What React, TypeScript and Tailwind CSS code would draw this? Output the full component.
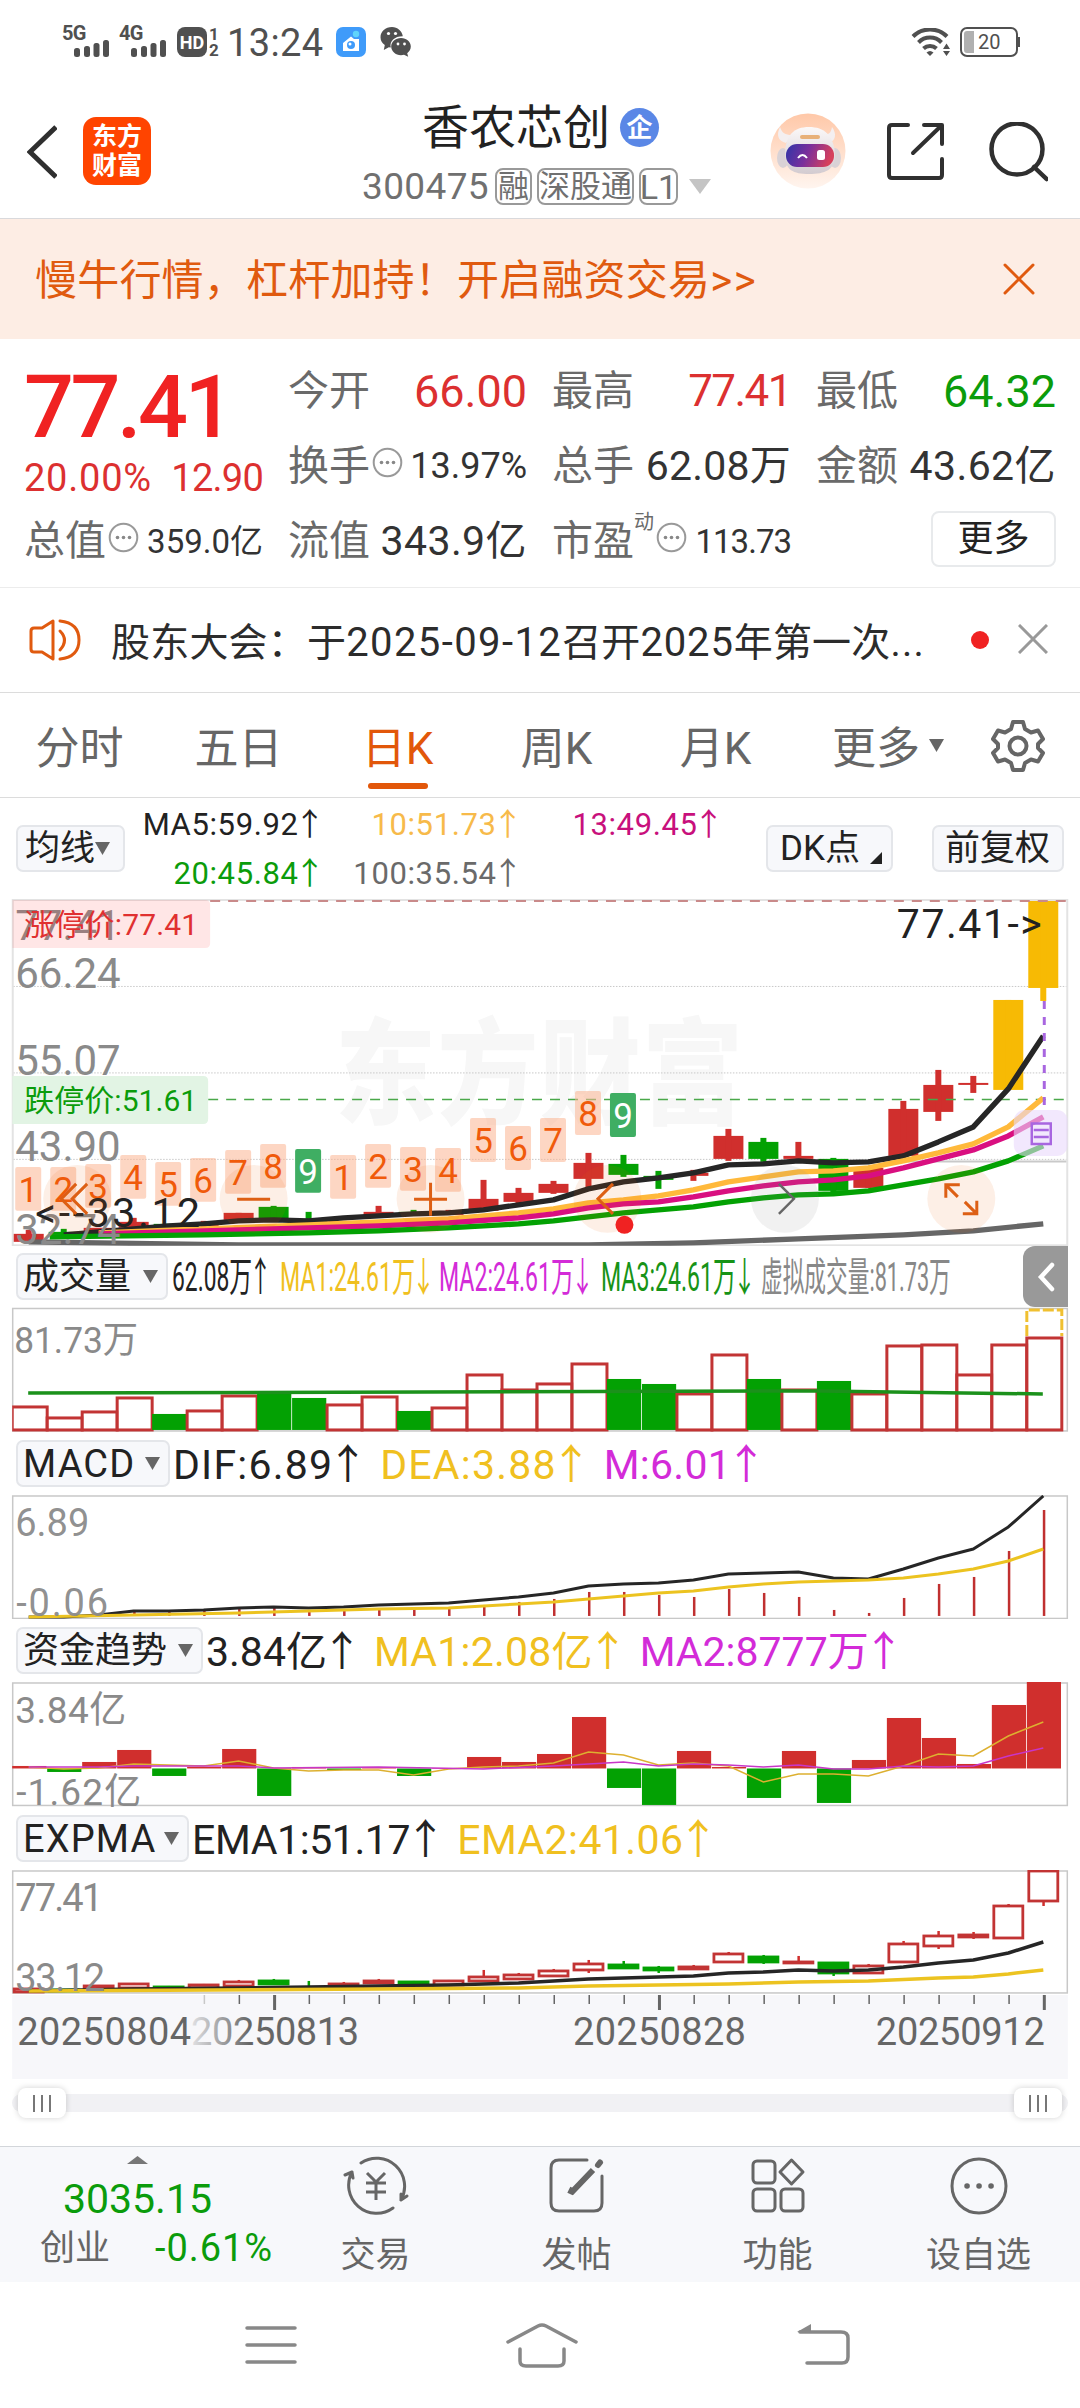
import React from 'react';
import clsx from 'clsx';

const RED = '#d02f2d';
const GREEN = '#03a103';
const YELLOW = '#f7ba04';

// x centre of the n-th trading day
const cx = (i: number) => 28.5 + 35 * i;

type Point = [number, number];
const line = (pts: Point[]) => pts.map(([i, y]) => `${cx(i)},${y}`).join(' ');
const series = (ys: number[]): Point[] => ys.map((y, i) => [i, y]);

// [colour, body top, body bottom, wick top, wick bottom]
type Candle = [string, number, number, number, number];

const candles: Candle[] = [
  ['r', 1234, 1242, 1230, 1242],
  ['g', 1232, 1235, 1229, 1236],
  ['r', 1228, 1232, 1228, 1232],
  ['r', 1222, 1228, 1218, 1228],
  ['g', 1224, 1227, 1224, 1227],
  ['r', 1224, 1226, 1221, 1227],
  ['r', 1213, 1220, 1213, 1220],
  ['g', 1207, 1220, 1206, 1221],
  ['g', 1220, 1222, 1212, 1222],
  ['r', 1221, 1224, 1221, 1224],
  ['r', 1212, 1216, 1206, 1216],
  ['g', 1212, 1214, 1210, 1216],
  ['r', 1211, 1215, 1210, 1215],
  ['r', 1199, 1211, 1180, 1211],
  ['r', 1193, 1202, 1188, 1204],
  ['r', 1184, 1193, 1181, 1194],
  ['r', 1163, 1179, 1153, 1188],
  ['g', 1164, 1175, 1155, 1177],
  ['g', 1176, 1180, 1171, 1189],
  ['r', 1173, 1176, 1170, 1181],
  ['r', 1136, 1159, 1129, 1161],
  ['g', 1142, 1159, 1138, 1162],
  ['r', 1156, 1159, 1142, 1159],
  ['g', 1159, 1191, 1158, 1193],
  ['r', 1168, 1188, 1168, 1188],
  ['r', 1109, 1156, 1101, 1156],
  ['r', 1085, 1112, 1070, 1121],
  ['r', 1083, 1085, 1076, 1093],
  ['y', 1000, 1090, 1000, 1090],
  ['y', 901, 988, 901, 1001],
];

const ma5: Point[] = [
  [1, 1235], [2, 1232], [3, 1229], [4, 1226], [5, 1224], [6, 1221], [7, 1220], [8, 1221], [9, 1218],
  [10, 1216], [11, 1214], [12, 1213], [13, 1210], [14, 1205], [15, 1200], [16, 1189], [17, 1182],
  [18, 1178], [19, 1173], [20, 1165], [21, 1164], [22, 1161], [23, 1163], [24, 1162], [25, 1156],
  [26, 1142], [27, 1127], [28, 1089], [29, 1036],
];
const ma10: Point[] = [
  [2, 1233], [5, 1229], [8, 1225], [10, 1222], [12, 1219], [14, 1213], [15, 1209], [16, 1203],
  [17, 1200], [18, 1196], [19, 1190], [20, 1182], [21, 1177], [22, 1172], [23, 1171], [24, 1168],
  [25, 1161], [26, 1153], [27, 1144], [28, 1127], [29, 1098],
];
const ma13: Point[] = [
  [2, 1234], [5, 1231], [8, 1228], [10, 1226], [12, 1223], [14, 1218], [15, 1214], [16, 1208],
  [17, 1204], [18, 1202], [19, 1197], [20, 1191], [21, 1186], [22, 1182], [23, 1180], [24, 1176],
  [25, 1168], [26, 1159], [27, 1150], [28, 1136], [29, 1117],
];
const ma20: Point[] = [
  [0.6, 1237], [5, 1235], [8, 1233], [10, 1231], [12, 1228], [14, 1224], [15, 1221], [16, 1217],
  [17, 1213], [18, 1210], [19, 1207], [20, 1202], [21, 1198], [22, 1195], [23, 1194], [24, 1191],
  [25, 1185], [26, 1179], [27, 1172], [28, 1161], [29, 1146],
];
const ma100: Point[] = [
  [0, 1242], [6, 1245], [16, 1245], [19, 1243], [22, 1239], [25, 1235], [27, 1231], [29, 1224],
];

// nine-turn signal badges: [label, top]
const turns: [number, number][] = [
  [1, 1167], [2, 1167], [3, 1164], [4, 1155], [5, 1162], [6, 1158], [7, 1150], [8, 1144], [9, 1149],
  [1, 1155], [2, 1144], [3, 1147], [4, 1148], [5, 1118], [6, 1126], [7, 1118], [8, 1091], [9, 1093],
];

const volumes: [string, number][] = [
  ['r', 1408], ['r', 1419], ['r', 1413], ['r', 1399], ['g', 1415], ['r', 1412], ['r', 1397], ['g', 1395],
  ['g', 1399], ['r', 1406], ['r', 1398], ['g', 1412], ['r', 1409], ['r', 1376], ['r', 1391], ['r', 1385],
  ['r', 1365], ['g', 1380], ['g', 1385], ['r', 1395], ['r', 1356], ['g', 1380], ['r', 1391], ['g', 1382],
  ['r', 1395], ['r', 1347], ['r', 1346], ['r', 1376], ['r', 1346], ['r', 1339],
];

const dif = series([
  1618, 1618, 1616, 1612, 1612, 1611, 1609, 1608, 1609, 1608, 1606, 1605, 1604, 1601, 1598, 1594, 1587,
  1585, 1584, 1581, 1575, 1574, 1573, 1579, 1580, 1570, 1559, 1550, 1528, 1497,
]);
const dea: Point[] = [
  [0, 1618], [3, 1616], [6, 1614], [8, 1612], [10, 1610], [12, 1609], [14, 1605], [15, 1603], [16, 1600],
  [17, 1597], [18, 1594], [19, 1592], [20, 1588], [21, 1585], [22, 1583], [23, 1582], [24, 1581],
  [25, 1579], [26, 1575], [27, 1570], [28, 1562], [29, 1550],
];
const macdBars = [
  1617, 1617, 1616, 1612, 1613, 1612, 1609, 1609, 1611, 1611, 1610, 1610, 1609, 1606, 1603, 1600, 1593,
  1593, 1596, 1598, 1590, 1594, 1598, 1611, 1614, 1599, 1585, 1578, 1552, 1511,
];

const flows = [
  1767, 1773, 1763, 1751, 1777, 1768, 1750, 1797, 1768, 1771, 1768, 1777, 1769, 1758, 1763, 1755, 1718,
  1789, 1806, 1752, 1768, 1799, 1752, 1804, 1761, 1719, 1739, 1765, 1706, 1683,
];
const flowMa1 = series([
  1768, 1770, 1769, 1765, 1766, 1767, 1762, 1769, 1772, 1771, 1771, 1776, 1770, 1768, 1767, 1764, 1753,
  1756, 1766, 1764, 1767, 1783, 1775, 1775, 1777, 1767, 1755, 1757, 1737, 1723,
]);
const flowMa2: Point[] = [
  [0, 1768], [2, 1768], [3, 1767], [6, 1767], [7, 1769], [10, 1768], [13, 1770], [15, 1767], [16, 1765],
  [17, 1763], [18, 1767], [19, 1765], [20, 1766], [21, 1768], [22, 1766], [23, 1770], [24, 1770],
  [25, 1767], [26, 1768], [27, 1767], [28, 1757], [29, 1749],
];

const expma: Candle[] = [
  ['r', 1988, 1992, 1988, 1992],
  ['g', 1989, 1991, 1989, 1991],
  ['r', 1985, 1988, 1985, 1988],
  ['r', 1983, 1988, 1983, 1988],
  ['g', 1986, 1988, 1986, 1988],
  ['r', 1984, 1988, 1984, 1988],
  ['r', 1981, 1986, 1980, 1986],
  ['g', 1980, 1984, 1979, 1985],
  ['g', 1987, 1988, 1981, 1988],
  ['r', 1983, 1987, 1982, 1987],
  ['r', 1980, 1983, 1979, 1984],
  ['g', 1981, 1982, 1981, 1982],
  ['r', 1980, 1985, 1980, 1985],
  ['r', 1976, 1981, 1970, 1982],
  ['r', 1974, 1979, 1973, 1979],
  ['r', 1970, 1976, 1969, 1977],
  ['r', 1963, 1970, 1960, 1973],
  ['g', 1964, 1968, 1961, 1969],
  ['g', 1967, 1970, 1966, 1973],
  ['r', 1966, 1969, 1965, 1969],
  ['r', 1953, 1962, 1952, 1963],
  ['g', 1956, 1962, 1955, 1964],
  ['r', 1961, 1963, 1956, 1964],
  ['g', 1962, 1973, 1962, 1976],
  ['r', 1965, 1973, 1964, 1974],
  ['r', 1943, 1962, 1941, 1963],
  ['r', 1935, 1946, 1931, 1949],
  ['r', 1934, 1937, 1932, 1939],
  ['r', 1905, 1938, 1904, 1939],
  ['r', 1870, 1901, 1870, 1906],
];
const ema1: Point[] = [
  [0, 1991], [3, 1989], [6, 1988], [8, 1987], [10, 1986], [12, 1985], [14, 1983], [16, 1979], [18, 1977],
  [19, 1976], [20, 1973], [21, 1972], [22, 1970], [23, 1971], [24, 1970], [25, 1967], [26, 1963],
  [27, 1960], [28, 1953], [29, 1942],
];
const ema2: Point[] = [
  [0, 1991], [10, 1989], [14, 1988], [16, 1986], [18, 1985], [20, 1984], [22, 1982], [24, 1981],
  [26, 1978], [27, 1977], [28, 1974], [29, 1970],
];

const fill = (c: string) => (c === 'r' ? RED : c === 'g' ? GREEN : YELLOW);

const Arrow: React.FC<{ down?: boolean }> = ({ down }) => (
  <span className="ml-[0.08em] inline-flex w-[0.58em] justify-center leading-none">{down ? '↓' : '↑'}</span>
);

const Bubble: React.FC = () => (
  <svg width="31" height="31" viewBox="0 0 31 31" fill="none" className="shrink-0">
    <circle cx="15.5" cy="15.5" r="13.8" stroke="#999" strokeWidth="2" />
    <circle cx="9.5" cy="15.5" r="1.8" fill="#888" />
    <circle cx="15.5" cy="15.5" r="1.8" fill="#888" />
    <circle cx="21.5" cy="15.5" r="1.8" fill="#888" />
  </svg>
);

const Signal: React.FC<{ label: string }> = ({ label }) => (
  <div className="relative h-8 w-[48px]">
    <span className="absolute left-0 top-0 text-[20px] font-bold leading-[16px] tracking-[-0.03em]">{label}</span>
    <svg width="36" height="18" viewBox="0 0 36 18" className="absolute bottom-0 left-3" fill="#505050">
      <rect x="0" y="9" width="6" height="9" rx="2.5" />
      <rect x="10" y="7" width="6" height="11" rx="2.5" />
      <rect x="19.5" y="4" width="6" height="14" rx="2.5" />
      <rect x="29" y="1" width="6" height="17" rx="2.5" />
    </svg>
  </div>
);

const StatusBar: React.FC = () => (
  <div className="flex h-[84px] items-start pl-[62px] pr-[60px] pt-[25px] text-[#505050]">
    <Signal label="5G" />
    <div className="w-[9px]" />
    <Signal label="4G" />
    <div className="ml-[10px] mt-[2px] flex h-[30px] w-[30px] items-center justify-center rounded-[8px] bg-[#505050] text-[18px] font-bold text-white">
      HD
    </div>
    <div className="ml-[2px] mt-[1px] flex w-[10px] flex-col text-center text-[17px] font-bold leading-[16px]">
      <span>1</span>
      <span>2</span>
    </div>
    <span className="ml-[8px] text-[38px] leading-[36px] tracking-[0.01em]">13:24</span>
    <svg width="30" height="30" viewBox="0 0 30 30" className="ml-[12px] mt-[2px]">
      <rect width="30" height="30" rx="7" fill="#3f9bfa" />
      <path d="M7 24V16L15 9.500L18 12H23V24Z" fill="#fff" />
      <circle cx="15" cy="18" r="4" fill="#3f9bfa" />
      <circle cx="14" cy="17" r="1.5" fill="#fff" />
      <circle cx="20" cy="7" r="3.2" fill="#5fd4fb" />
    </svg>
    <svg width="31" height="30" viewBox="0 0 31 30" className="ml-[14px] mt-[2px]" fill="#505050">
      <path d="M12 0C5.400 0 .5 4.500 .5 10.200c0 3.400 1.700 6 4.300 7.900L3.800 23l5-2.800 2 .4c-1.600-6.600 4-11.500 12-11.400C22 4 17.500 0 12 0Z" />
      <path d="M21 11c-5.600 0-9.800 3.800-9.800 8.600s4.200 8.600 9.800 8.600c1 0 2-.1 3-.4l4.200 2-1-3.600c2.200-1.600 3.600-4 3.600-6.600C30.800 14.800 26.600 11 21 11Z" />
      <circle cx="8.5" cy="6.5" r="1.6" fill="#fff" />
      <circle cx="15.5" cy="6.5" r="1.6" fill="#fff" />
      <circle cx="18" cy="17" r="1.4" fill="#fff" />
      <circle cx="24.5" cy="17" r="1.4" fill="#fff" />
    </svg>
    <div className="flex-1" />
    <svg width="40" height="30" viewBox="0 0 40 30" fill="none" stroke="#505050" strokeWidth="4" className="mt-[3px]">
      <path d="M2 8.500A24 24 0 0 1 36 8.500" />
      <path d="M7.500 14.500A16 16 0 0 1 30.500 14.500" />
      <path d="M12.500 20.500A9.500 9.500 0 0 1 25.500 20.500" />
      <path d="M19 28L15.500 24.500Q19 21.500 22.500 24.500Z" fill="#505050" stroke="none" />
      <path d="M32 21L35.500 15.500L39 21Z M32 23L35.500 28L39 23Z" fill="#505050" stroke="none" />
    </svg>
    <div className="ml-[9px] mt-[2px] flex h-[30px] w-[58px] items-center rounded-[7px] border-2 border-[#505050] p-[2px]">
      <div className="h-full w-[10px] rounded-l-[3px] bg-[#b0b0b0]" />
      <span className="ml-[4px] text-[20px] leading-none">20</span>
    </div>
    <div className="mt-[12px] h-[10px] w-[2px] bg-[#505050]" />
  </div>
);

const Robot: React.FC = () => (
  <svg width="76" height="76" viewBox="0 0 76 76">
    <defs>
      <linearGradient id="halo" x1="0" y1="0" x2="0" y2="1">
        <stop offset="0" stopColor="#ffc8a8" />
        <stop offset="1" stopColor="#fff5ef" />
      </linearGradient>
      <linearGradient id="visor" x1="0" y1="0" x2="1" y2="0.2">
        <stop offset="0" stopColor="#2f35a8" />
        <stop offset="0.5" stopColor="#7a2f9c" />
        <stop offset="1" stopColor="#d6405c" />
      </linearGradient>
      <linearGradient id="shell" x1="0" y1="0" x2="0" y2="1">
        <stop offset="0" stopColor="#fbf8f8" />
        <stop offset="1" stopColor="#d3cbd0" />
      </linearGradient>
    </defs>
    <circle cx="38" cy="38" r="37.5" fill="url(#halo)" />
    <path d="M10 14C6 22 8 28 16 30L22 22C15 22 12 20 10 14Z" fill="#f4eff0" />
    <path d="M62 14C67 21 66 28 58 30L52 22C59 22 61 20 62 14Z" fill="#f4eff0" />
    <ellipse cx="13" cy="45" rx="6" ry="10" fill="#d9d2d6" />
    <ellipse cx="65" cy="45" rx="6" ry="10" fill="#d9d2d6" />
    <path d="M15 42C15 22 24 14 39 14S64 22 65 42C65 57 55 61 39 61S15 57 15 42Z" fill="url(#shell)" />
    <rect x="30" y="22" width="20" height="4" rx="2" fill="#e8b078" />
    <rect x="16" y="31" width="48" height="23" rx="11" fill="url(#visor)" />
    <path d="M28 45Q32.500 39 37 45" stroke="#fff" strokeWidth="2" fill="none" />
    <rect x="47" y="37" width="8" height="10" rx="2.5" fill="#fff" />
  </svg>
);

const Header: React.FC = () => (
  <div className="flex h-[135px] items-start border-b-[1.5px] border-[#d9d9dc]">
    <svg width="30" height="54" viewBox="0 0 30 54" fill="none" className="ml-[27px] mt-[41px]">
      <path d="M29 2L3 27L29 52" stroke="#2f2f2f" strokeWidth="5" />
    </svg>
    <div className="ml-[26px] mt-[33px] flex h-[68px] w-[68px] flex-col items-center justify-center rounded-[13px] bg-[#ff4400] text-[25px] font-bold leading-[29px] text-white">
      <span>东方</span>
      <span>财富</span>
    </div>
    <div className="ml-[211px] mt-[15px] flex w-[350px] flex-col">
      <div className="ml-[60px] flex h-[58px] items-center text-[47px] leading-none text-[#222]">
        香农芯创
        <span className="ml-[10px] flex h-[39px] w-[39px] items-center justify-center rounded-full bg-[#5a87e6] text-[26px] font-bold text-white">
          企
        </span>
      </div>
      <div className="flex h-[60px] items-center whitespace-nowrap text-[37px] leading-none text-[#707070]">
        <span className="tracking-[0.01em]">300475</span>
        <span className="ml-[6px] flex h-[37px] w-[37px] items-center justify-center rounded-[8px] border-2 border-[#999] text-[31px]">
          融
        </span>
        <span className="ml-[5px] flex h-[37px] w-[97px] items-center justify-center rounded-[8px] border-2 border-[#999] text-[31px]">
          深股通
        </span>
        <span className="ml-[5px] flex h-[37px] w-[39px] items-center justify-center rounded-[8px] border-2 border-[#999] text-[34px]">
          L1
        </span>
        <svg width="22" height="15" viewBox="0 0 22 15" className="ml-[11px]">
          <path d="M0 0H22L11 15Z" fill="#c4c4c4" />
        </svg>
      </div>
    </div>
    <div className="ml-[58px] mt-[29px]">
      <Robot />
    </div>
    <svg width="60" height="60" viewBox="0 0 60 60" fill="none" stroke="#303030" strokeWidth="4" strokeLinecap="round" strokeLinejoin="round" className="ml-[40px] mt-[38px]">
      <path d="M22 3H6Q3 3 3 6V53Q3 56 6 56H53Q56 56 56 53V37" />
      <path d="M38 3H56V22M55 4L27 31" />
    </svg>
    <svg width="60" height="60" viewBox="0 0 60 60" fill="none" stroke="#303030" strokeWidth="4.5" strokeLinecap="round" className="ml-[42px] mt-[38px]">
      <circle cx="29" cy="27" r="25.5" />
      <path d="M46 45L58.500 57" />
    </svg>
  </div>
);

const Banner: React.FC = () => (
  <div className="flex h-[120px] items-center justify-between bg-[#fdede4] pl-[35px] pr-[45px] text-[#e05a0f]">
    <span className="mt-[5px] text-[42px] leading-none tracking-[0.2px]">
      慢牛行情，杠杆加持！开启融资交易<span className="tracking-[0.04em]">&gt;&gt;</span>
    </span>
    <svg width="32" height="32" viewBox="0 0 32 32" stroke="#e05a0f" strokeWidth="3" strokeLinecap="round">
      <path d="M2 2L30 30M30 2L2 30" />
    </svg>
  </div>
);

type CellProps = { label: string; value: string; tone?: string; size?: string; bubble?: boolean; sup?: string };

const Cell: React.FC<CellProps> = ({ label, value, tone = 'text-[#333]', size = 'text-[41px]', bubble, sup }) => (
  <div className="-ml-[2px] flex h-[75px] items-center whitespace-nowrap leading-none">
    <span className="text-[41px] text-[#6a6a6a]">{label}</span>
    {sup && <span className="-mt-[38px] text-[20px] text-[#6a6a6a]">{sup}</span>}
    {bubble && (
      <span className="-mt-[8px] ml-[2px] flex">
        <Bubble />
      </span>
    )}
    <span className={clsx('ml-auto', tone, size)}>{value}</span>
  </div>
);

const Quote: React.FC = () => (
  <div className="grid h-[249px] grid-cols-[237px_237px_237px_238px] content-start gap-x-[27px] border-b-[1.5px] border-[#ececec] px-[26px] pt-[15px]">
    <div className="row-span-2 flex h-[150px] flex-col whitespace-nowrap leading-none">
      <span className="mt-[9px] -ml-[2px] text-[88px] font-medium tracking-[-0.04em] text-[#f02222]">77.41</span>
      <div className="mt-[8px] -ml-[2px] flex justify-between text-[38px] text-[#dc3030]">
        <span className="tracking-[0.02em]">20.00%</span>
        <span className="tracking-[-0.02em]">12.90</span>
      </div>
    </div>
    <Cell label="今开" value="66.00" tone="text-[#dc3030]" size="text-[45px]" />
    <Cell label="最高" value="77.41" tone="text-[#dc3030]" size="text-[44px] tracking-[-0.035em]" />
    <Cell label="最低" value="64.32" tone="text-[#0b9c0b]" size="text-[45px]" />
    <Cell label="换手" value="13.97%" size="text-[36px]" bubble />
    <Cell label="总手" value="62.08万" size="text-[41px] tracking-[0.005em]" />
    <Cell label="金额" value="43.62亿" size="text-[41px] tracking-[0.01em]" />
    <Cell label="总值" value="359.0亿" size="text-[33px]" bubble />
    <Cell label="流值" value="343.9亿" size="text-[41px] tracking-[0.01em]" />
    <Cell label="市盈" value="113.73" size="text-[33px] tracking-[-0.03em]" bubble sup="动" />
    <div className="ml-auto mt-[7px] flex h-[56px] w-[125px] items-center justify-center rounded-[8px] border-2 border-[#e8eaec] text-[36px] leading-none text-[#222]">
      更多
    </div>
  </div>
);

const News: React.FC = () => (
  <div className="flex h-[105px] items-center border-b-[1.5px] border-[#dcdcdc] pl-[29px] leading-none">
    <svg width="52" height="44" viewBox="0 0 52 44" fill="none" stroke="#e05a0f" strokeWidth="3" strokeLinejoin="round">
      <path d="M24 3V41L13 34H5Q2 34 2 31V13Q2 10 5 10H13Z" />
      <path d="M31 13Q40 22 31 32M31 3Q50 5 50 22T31 41" strokeLinecap="round" />
    </svg>
    <span className="mt-[6px] ml-[30px] w-[820px] whitespace-nowrap text-[39px] tracking-[0.2px] text-[#2c2c2c]">
      股东大会：于<span className="text-[40px] tracking-[1.4px]">2025-09-12</span>召开
      <span className="text-[40px] tracking-[0.8px]">2025</span>年第一次<span className="tracking-[1.2px]">...</span>
    </span>
    <span className="ml-[40px] h-[18px] w-[18px] rounded-full bg-[#f02222]" />
    <svg width="30" height="30" viewBox="0 0 30 30" stroke="#999" strokeWidth="3" className="-mt-[2px] ml-[29px]">
      <path d="M1 1L29 29M29 1L1 29" />
    </svg>
  </div>
);

const tabs = ['分时', '五日', '日K', '周K', '月K'];

const Tabs: React.FC = () => (
  <div className="flex h-[105px] border-b-[1.5px] border-[#dcdcdc] text-[44px] leading-none text-[#666]">
    {tabs.map((tab) => (
      <div
        key={tab}
        className={clsx('flex w-[159px] flex-col items-center pt-[34px]', tab === '日K' && 'text-[#e2570a]')}
      >
        <span>{tab}</span>
        {tab === '日K' && <span className="mt-[12px] h-[6px] w-[60px] rounded-full bg-[#e2570a]" />}
      </div>
    ))}
    <div className="flex w-[150px] items-start pl-[37px] pt-[34px]">
      <span className="whitespace-nowrap">更多</span>
      <svg width="15" height="13" viewBox="0 0 15 13" className="ml-[9px] mt-[12px] shrink-0">
        <path d="M0 0H15L7.500 13Z" fill="#666" />
      </svg>
    </div>
    <svg width="54" height="54" viewBox="0 0 54 54" fill="none" stroke="#666" strokeWidth="4" strokeLinejoin="round" className="ml-[46px] mt-[26px]">
      <path d="M22 3H32L34 10L40 13.500L47 11.500L52 20L47 25V29L52 34L47 42.500L40 40.500L34 44L32 51H22L20 44L14 40.500L7 42.500L2 34L7 29V25L2 20L7 11.500L14 13.500L20 10Z" />
      <circle cx="27" cy="27" r="8.5" />
    </svg>
  </div>
);

const Chip: React.FC<{ className: string; children: React.ReactNode }> = ({ className, children }) => (
  <div className={clsx('flex h-[47px] shrink-0 items-center whitespace-nowrap rounded-[7px] border-2 border-[#e4e6ea] bg-[#f7f8fb] leading-none text-[#222]', className)}>
    {children}
  </div>
);

const Caret: React.FC = () => (
  <svg width="15" height="13" viewBox="0 0 15 13" className="shrink-0">
    <path d="M0 0H15L7.500 13Z" fill="#666" />
  </svg>
);

const AverageRow: React.FC = () => (
  <div className="flex h-[101px] items-start pl-[16px] pr-[16px] pt-[27px]">
    <Chip className="w-[109px] pl-[7px] text-[35px]">
      均线
      <Caret />
    </Chip>
    <div className="-mt-[25px] ml-[4px] grid grid-cols-[190px_198px_201px] text-right text-[31px] leading-[49px] tracking-[0.02em]">
      <span className="text-[#222]">MA5:59.92<Arrow /></span>
      <span className="text-[#f7ba4a]">10:51.73<Arrow /></span>
      <span className="text-[#c8107c]">13:49.45<Arrow /></span>
      <span className="text-[#0b9c0b]">20:45.84<Arrow /></span>
      <span className="text-[#6a6a6a]">100:35.54<Arrow /></span>
    </div>
    <Chip className="ml-auto w-[127px] pl-[12px] text-[35px]">
      DK点
      <svg width="12" height="12" viewBox="0 0 12 12" className="ml-[10px] mt-[20px] shrink-0">
        <path d="M12 0V12H0Z" fill="#222" />
      </svg>
    </Chip>
    <Chip className="ml-[39px] w-[132px] pl-[11px] text-[35px]">前复权</Chip>
  </div>
);

const MainChart: React.FC = () => (
  <svg width="1080" height="348" viewBox="0 899 1080 348" className="block" fontFamily="Roboto, 'Noto Sans CJK SC', sans-serif">
    <defs>
      <clipPath id="main-clip">
        <rect x="12" y="900" width="1056" height="346" />
      </clipPath>
    </defs>
    <text x="335" y="0" fontSize="101" fontWeight="900" fill="#f7f7f7" textLength="408" transform="translate(0 1115) scale(1 1.14)">
      东方财富
    </text>
    <g stroke="#c8c8c8" strokeWidth="1" strokeDasharray="1.5 1.5">
      <path d="M13 986.500H1067M13 1073H1067M13 1159.500H1067" />
    </g>
    <path d="M849 1161.500H1067" stroke="#c9c9c9" strokeWidth="2" />
    <rect x="12.5" y="900" width="1055" height="345.5" fill="none" stroke="#e3e3e3" strokeWidth="2" />
    <g clipPath="url(#main-clip)">
      {candles.map(([c, top, bottom, high, low], i) => (
        <g key={i} fill={fill(c)}>
          <rect x={cx(i) - 15} y={top} width={30} height={bottom - top} />
          <rect x={cx(i) - 3} y={high} width={6} height={low - high} />
        </g>
      ))}
      <path d="M208 1099.500H1067" stroke="#4aa84a" strokeWidth="1.5" strokeDasharray="10 8" />
      <path d="M210 901H1067" stroke="#c98a8a" strokeWidth="2" strokeDasharray="10 8" />
      <g fill="none" strokeWidth="5.4" strokeLinejoin="round">
        <polyline points={line(ma100)} stroke="#666" />
        <polyline points={line(ma5)} stroke="#262626" />
        <polyline points={line(ma10)} stroke="#ffb93b" />
        <polyline points={line(ma13)} stroke="#d90f80" />
        <polyline points={line(ma20)} stroke="#03a103" />
      </g>
      <g fontSize="42" fill="#8a8a8a">
        <text x="15" y="940.5">77.41</text>
        <text x="15" y="988.5">66.24</text>
        <text x="15" y="1075">55.07</text>
        <text x="15" y="1161.5">43.90</text>
        <text x="15" y="1244">32.74</text>
      </g>
      <path d="M1044.500 1001V1105" stroke="#a866e0" strokeWidth="3" strokeDasharray="8 8" />
      <path d="M12 900H205Q210 900 210 905V943Q210 948 205 948H12Z" fill="#ff4040" fillOpacity="0.13" />
      <path d="M12 1076H203Q208 1076 208 1081V1119Q208 1124 203 1124H12Z" fill="#e2f4e4" />
      <text x="24" y="935.5" fontSize="30" fill="#e03030" textLength="174">涨停价:77.41</text>
      <text x="24" y="1111.5" fontSize="30" fill="#0b9c0b" textLength="173">跌停价:51.61</text>
      {turns.map(([n, top], i) => (
        <g key={i}>
          <rect x={cx(i) - 13.5} y={top} width={26} height={44} rx={2} fill={n === 9 ? '#3fae63' : '#fbb492'} fillOpacity={n === 9 ? 1 : 0.55} />
          <text x={cx(i) - 0.5} y={top + 35} fontSize="35" textAnchor="middle" fill={n === 9 ? '#fff' : '#f05a0a'}>
            {n}
          </text>
        </g>
      ))}
      <rect x="1014" y="1110" width="54" height="46" rx="11" fill="#ead9fc" fillOpacity="0.6" />
      <g fill="none" stroke="#a866e0" strokeWidth="2.5">
        <path d="M1032 1123.500H1051V1144H1032ZM1034 1130H1049M1034 1137H1049" />
      </g>
      <text x="35" y="1227" fontSize="41" fill="#222" textLength="165">&lt;--33.12</text>
      <text x="897" y="938.5" fontSize="41" fill="#222" textLength="145">77.41-&gt;</text>
      <g fill="#ec6109" fillOpacity="0.1">
        <circle cx="77" cy="1199" r="34" />
        <circle cx="253.5" cy="1199" r="34" />
        <circle cx="430.5" cy="1199" r="34" />
        <circle cx="607.5" cy="1199" r="34" />
        <circle cx="961.5" cy="1199" r="34" />
      </g>
      <circle cx="785" cy="1199" r="34" fill="#888" fillOpacity="0.12" />
      <g fill="none" stroke="#dd5f14" strokeWidth="3">
        <path d="M76 1184L61 1199L76 1214M87 1184L72 1199L87 1214" />
        <path d="M237 1199.500H270M414 1199.500H447M430.500 1183V1216" />
        <path d="M613 1184L598 1199L613 1214" />
        <path d="M946 1198V1185H960M947 1186L958 1197M977 1201V1214H963M976 1213L965 1202" />
      </g>
      <path d="M779 1184L794 1199L779 1214" fill="none" stroke="#666" strokeWidth="2.5" />
      <circle cx="624.5" cy="1225" r="9" fill="#f02222" />
    </g>
  </svg>
);

const VolumeChart: React.FC = () => (
  <svg width="1080" height="125" viewBox="0 1308 1080 125" className="block" fontFamily="Roboto, 'Noto Sans CJK SC', sans-serif">
    <defs>
      <clipPath id="volume-clip">
        <rect x="12" y="1308" width="1056" height="125" />
      </clipPath>
    </defs>
    <rect x="12.5" y="1309.5" width="1055" height="122.5" fill="none" stroke="#c8c8c8" strokeWidth="1.5" />
    <text x="14" y="1354" fontSize="37" fill="#8a8a8a" textLength="124" lengthAdjust="spacingAndGlyphs">81.73万</text>
    <g clipPath="url(#volume-clip)">
      {volumes.map(([c, top], i) =>
        c === 'r' ? (
          <rect key={i} x={cx(i) - 16.5} y={top} width={35} height={1431 - top} fill="#fff" fillOpacity={0.6} stroke="#c23434" strokeWidth={3} />
        ) : (
          <rect key={i} x={cx(i) - 16.5} y={top} width={34.2} height={1431 - top} fill={GREEN} />
        ),
      )}
    </g>
    <path d="M1027 1337V1311H1062V1337" fill="none" stroke="#f0c030" strokeWidth="3" strokeDasharray="11 3" />
    <polyline points="28,1394 820,1392 1043,1395" fill="none" stroke="#1b911b" strokeWidth="3.5" />
  </svg>
);

const MacdChart: React.FC = () => (
  <svg width="1080" height="124" viewBox="0 1496 1080 124" className="block" fontFamily="Roboto, sans-serif">
    <rect x="12.5" y="1497" width="1055" height="122.5" fill="none" stroke="#c8c8c8" strokeWidth="1.5" />
    {macdBars.map((top, i) => (
      <rect key={i} x={cx(i) - 0.5} y={top} width={2.5} height={1617 - top} fill="#c03030" />
    ))}
    <g fill="none" strokeWidth="3" strokeLinejoin="round">
      <polyline points={line(dif)} stroke="#262626" />
      <polyline points={line(dea)} stroke="#ecc320" />
    </g>
    <g fontSize="38" fill="#8a8a8a" fillOpacity="0.95">
      <text x="15" y="1537">6.89</text>
      <text x="16" y="1617" textLength="92">-0.06</text>
    </g>
  </svg>
);

const FlowChart: React.FC = () => (
  <svg width="1080" height="125" viewBox="0 1683 1080 125" className="block" fontFamily="Roboto, 'Noto Sans CJK SC', sans-serif">
    <rect x="12.5" y="1684" width="1055" height="122.5" fill="none" stroke="#c8c8c8" strokeWidth="1.5" />
    {flows.map((y, i) => (
      <rect key={i} x={cx(i) - 16.5} y={Math.min(y, 1769.5)} width={34.2} height={Math.abs(1769.5 - y)} fill={y < 1769.5 ? RED : GREEN} />
    ))}
    <polyline points={line(flowMa1)} fill="none" stroke="#ddb030" strokeWidth="1.5" />
    <polyline points={line(flowMa2)} fill="none" stroke="#c836c8" strokeWidth="1.5" />
    <g fontSize="37" fill="#8a8a8a">
      <text x="15" y="1724" textLength="111">3.84亿</text>
      <text x="16" y="1806" textLength="125">-1.62亿</text>
    </g>
  </svg>
);

const ExpmaChart: React.FC = () => (
  <svg width="1080" height="124" viewBox="0 1870 1080 124" className="block" fontFamily="Roboto, sans-serif">
    <rect x="12.5" y="1871" width="1055" height="122" fill="none" stroke="#c8c8c8" strokeWidth="1.5" />
    {expma.map(([c, top, bottom, high, low], i) => (
      <g key={i}>
        <rect x={cx(i) - 1} y={high} width={2.5} height={low - high} fill={fill(c)} />
        <rect
          x={cx(i) - 14.5}
          y={top + 1}
          width={29}
          height={Math.max(bottom - top - 1, 1)}
          fill={c === 'r' ? '#fff' : GREEN}
          stroke={c === 'r' ? '#c23434' : GREEN}
          strokeWidth={2.8}
        />
      </g>
    ))}
    <g fill="none" strokeWidth="3.5" strokeLinejoin="round">
      <polyline points={line(ema1)} stroke="#262626" />
      <polyline points={line(ema2)} stroke="#ecc320" />
    </g>
    <g fontSize="38" fill="#8a8a8a">
      <text x="15" y="1911" textLength="88">77.41</text>
      <text x="15" y="1991" textLength="90">33.12</text>
    </g>
  </svg>
);

const DateAxis: React.FC = () => (
  <svg width="1080" height="85" viewBox="0 1994 1080 85" className="block" fontFamily="Roboto, sans-serif">
    <defs>
      <linearGradient id="fade" x1="0" x2="1" y1="0" y2="0">
        <stop offset="0" stopColor="#666" stopOpacity="0.15" />
        <stop offset="0.35" stopColor="#666" />
      </linearGradient>
    </defs>
    <rect x="12" y="1995" width="1056" height="84" fill="#f7f7fa" />
    {Array.from({ length: 25 }, (_, n) => n + 5).map((i) => {
      const major = i === 7 || i === 18 || i === 29;
      return (
        <rect
          key={i}
          x={cx(i) + (major ? -0.5 : 0)}
          y={1995}
          width={major ? 3 : 1.5}
          height={major ? 15 : 9}
          fill={i === 5 ? '#c8c8c8' : '#666'}
        />
      );
    })}
    <g fontSize="38" fill="#666">
      <text x="17" y="2045" textLength="174">20250804</text>
      <text x="191" y="2045" textLength="168" fill="url(#fade)">20250813</text>
      <text x="573" y="2045" textLength="173">20250828</text>
      <text x="876" y="2045" textLength="169">20250912</text>
    </g>
  </svg>
);

type Stat = { text: string; tone: string };

const IndicatorRow: React.FC<{ name: string; chip: string; stats: Stat[] }> = ({ name, chip, stats }) => (
  <div className="flex h-[63px] items-center whitespace-nowrap pl-[16px] text-[41px] leading-none">
    <Chip className={clsx('justify-between pr-[8px]', chip)}>
      {name}
      <Caret />
    </Chip>
    <div className="ml-[3px] mt-[3px] flex gap-[20px]">
      {stats.map((s) => (
        <span key={s.text} className={s.tone}>
          {s.text}
          <Arrow />
        </span>
      ))}
    </div>
  </div>
);

const VolumeRow: React.FC = () => (
  <div className="relative flex h-[61px] items-center whitespace-nowrap pl-[16px] text-[40px] leading-none">
    <Chip className="w-[152px] justify-between pl-[5px] pr-[8px] text-[36px]">
      成交量
      <Caret />
    </Chip>
    <div className="ml-[4px] mt-[3px] w-[108px] text-[#222]">
      <div className="w-max origin-left scale-x-[0.57]">62.08万<Arrow /></div>
    </div>
    <div className="mt-[3px] w-[159px] text-[#f0c020]">
      <div className="w-max origin-left scale-x-[0.577]">MA1:24.61万<Arrow down /></div>
    </div>
    <div className="mt-[3px] w-[162px] text-[#d32bd8]">
      <div className="w-max origin-left scale-x-[0.577]">MA2:24.61万<Arrow down /></div>
    </div>
    <div className="mt-[3px] w-[160px] text-[#179317]">
      <div className="w-max origin-left scale-x-[0.577]">MA3:24.61万<Arrow down /></div>
    </div>
    <div className="mt-[3px] w-[200px] text-[#888]">
      <div className="w-max origin-left scale-x-[0.542]">虚拟成交量:81.73万</div>
    </div>
    <div className="absolute right-[12px] top-0 flex h-[61px] w-[45px] items-center justify-center rounded-l-[12px] bg-[#999]">
      <svg width="18" height="30" viewBox="0 0 18 30" fill="none">
        <path d="M15 3L4 15L15 27" stroke="#fff" strokeWidth="4.5" strokeLinecap="round" />
      </svg>
    </div>
  </div>
);

const Handle: React.FC = () => (
  <div className="flex h-[30px] w-[48px] items-center justify-center gap-[6px] rounded-[8px] bg-white shadow-[0_0_6px_rgba(0,0,0,0.18)]">
    <span className="h-[17px] w-[2px] bg-[#777]" />
    <span className="h-[17px] w-[2px] bg-[#777]" />
    <span className="h-[17px] w-[2px] bg-[#777]" />
  </div>
);

const RangeSlider: React.FC = () => (
  <div className="flex h-[67px] items-start px-[12px] pt-[9px]">
    <div className="mt-[6px] flex h-[18px] w-full items-center justify-between rounded-full bg-[#f1f1f4] px-[6px]">
      <Handle />
      <Handle />
    </div>
  </div>
);

const Action: React.FC<{ label: string; children: React.ReactNode }> = ({ label, children }) => (
  <div className="flex w-[201px] flex-col items-center pt-[9px] text-[35px] leading-none text-[#666]">
    <svg width="66" height="60" viewBox="-33 -30 66 60" fill="none" stroke="#666" strokeWidth="3" strokeLinecap="round" strokeLinejoin="round">
      {children}
    </svg>
    <span className="mt-[22px]">{label}</span>
  </div>
);

const BottomBar: React.FC = () => (
  <div className="flex h-[136px] border-t-[1.5px] border-[#d3d6da] bg-[#f7f8fb]">
    <div className="flex w-[275px] flex-col items-center pt-[9px] leading-none">
      <svg width="21" height="8" viewBox="0 0 21 8">
        <path d="M0 8L10.500 0L21 8Z" fill="#777" />
      </svg>
      <span className="mt-[15px] text-[41px] text-[#0b9c0b]">3035.15</span>
      <div className="mt-[9px] flex w-full items-center pl-[40px]">
        <span className="text-[35px] text-[#666]">创业</span>
        <span className="ml-[45px] text-[38px] tracking-[0.025em] text-[#0b9c0b]">-0.61%</span>
      </div>
    </div>
    <Action label="交易">
      <path d="M-15 -23A28 28 0 0 1 25 14M25 14L31 10M25 14V8M17 22A28 28 0 0 1 -24 -14M-24 -14L-31 -11M-24 -14L-23 -8" />
      <path d="M-9 -13L0 -4L9 -13M0 -4V14M-10 -3H10M-10 6H10" strokeLinecap="butt" />
    </Action>
    <Action label="发帖">
      <path d="M10 -26H-18Q-26 -26 -26 -18V17Q-26 25 -18 25H17Q25 25 25 17V-10" />
      <path d="M-6 7L16 -16M-7 8L-4 2" strokeWidth="6" strokeLinecap="butt" />
      <path d="M21 -21L23 -23.500" strokeWidth="6" />
    </Action>
    <Action label="功能">
      <rect x="-25" y="-25" width="22" height="22" rx="4" />
      <rect x="-25" y="3" width="22" height="22" rx="4" />
      <rect x="3" y="3" width="22" height="22" rx="4" />
      <path d="M13.500 -26L25 -14L13.500 -2L2 -14Z" />
    </Action>
    <Action label="设自选">
      <circle cx="0" cy="0" r="27" />
      <path d="M-12 0H-11.900M0 0H.1M12 0H12.100" strokeWidth="5.5" />
    </Action>
  </div>
);

const NavBar: React.FC = () => (
  <div className="flex h-[126px] items-start pl-[245px] pt-[41px]">
    <svg width="52" height="44" viewBox="0 0 52 44" stroke="#888" strokeWidth="3.5" strokeLinecap="round">
      <path d="M2 5H50M2 22H50M2 39H50" />
    </svg>
    <svg width="72" height="46" viewBox="0 0 72 46" fill="none" stroke="#888" strokeWidth="3.5" strokeLinecap="round" strokeLinejoin="round" className="ml-[209px]">
      <path d="M2 19L32 3Q36 1 40 3L70 19M14 26V38Q14 43 20 43H52Q58 43 58 38V26" />
    </svg>
    <svg width="54" height="46" viewBox="0 0 54 46" fill="none" stroke="#888" strokeWidth="3.5" strokeLinecap="round" className="ml-[218px]">
      <path d="M4 9H45Q52 9 52 15V34Q52 40 46 40H11" />
      <path d="M1 9L15 1V10Z" fill="#888" stroke="none" />
    </svg>
  </div>
);

const App: React.FC = () => {
  return (
    <div className="flex h-[2408px] w-[1080px] flex-col overflow-hidden bg-white font-[Roboto,'Noto_Sans_CJK_SC',sans-serif]">
      <StatusBar />
      <Header />
      <Banner />
      <Quote />
      <News />
      <Tabs />
      <AverageRow />
      <MainChart />
      <VolumeRow />
      <VolumeChart />
      <IndicatorRow
        name="MACD"
        chip="w-[154px] pl-[5px] text-[38px] tracking-[0.03em]"
        stats={[
          { text: 'DIF:6.89', tone: 'text-[#222] tracking-[1.2px]' },
          { text: 'DEA:3.88', tone: 'text-[#f0c020] tracking-[1.2px]' },
          { text: 'M:6.01', tone: 'text-[#d32bd8] tracking-[0.3px]' },
        ]}
      />
      <MacdChart />
      <IndicatorRow
        name="资金趋势"
        chip="w-[187px] pl-[5px] text-[36px]"
        stats={[
          { text: '3.84亿', tone: 'text-[#222]' },
          { text: 'MA1:2.08亿', tone: 'text-[#f0c020] tracking-[0.2px]' },
          { text: 'MA2:8777万', tone: 'text-[#d32bd8]' },
        ]}
      />
      <FlowChart />
      <IndicatorRow
        name="EXPMA"
        chip="w-[173px] pl-[5px] text-[38px] tracking-[0.03em]"
        stats={[
          { text: 'EMA1:51.17', tone: 'text-[#222] tracking-[-0.4px]' },
          { text: 'EMA2:41.06', tone: 'text-[#f0c020] tracking-[0.4px]' },
        ]}
      />
      <ExpmaChart />
      <DateAxis />
      <RangeSlider />
      <BottomBar />
      <NavBar />
    </div>
  );
};

export default App;
